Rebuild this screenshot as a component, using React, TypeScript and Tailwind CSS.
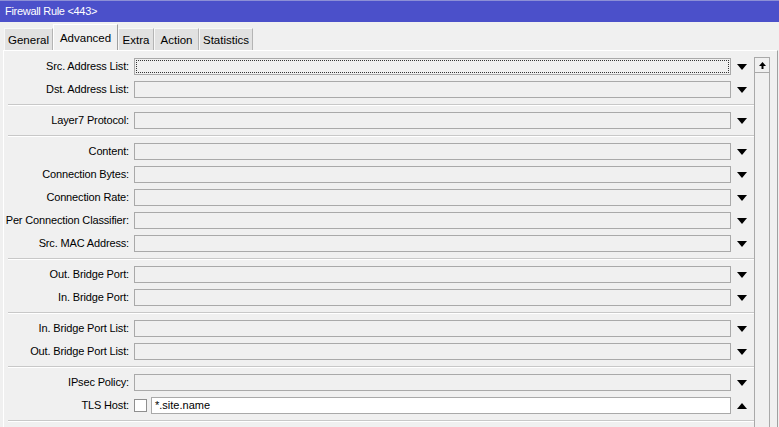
import React from 'react';

type Row = { label: string; kind?: 'tls'; focus?: boolean } | 'sep';

const rows: Row[] = [
  { label: 'Src. Address List:', focus: true },
  { label: 'Dst. Address List:' },
  'sep',
  { label: 'Layer7 Protocol:' },
  'sep',
  { label: 'Content:' },
  { label: 'Connection Bytes:' },
  { label: 'Connection Rate:' },
  { label: 'Per Connection Classifier:' },
  { label: 'Src. MAC Address:' },
  'sep',
  { label: 'Out. Bridge Port:' },
  { label: 'In. Bridge Port:' },
  'sep',
  { label: 'In. Bridge Port List:' },
  { label: 'Out. Bridge Port List:' },
  'sep',
  { label: 'IPsec Policy:' },
  { label: 'TLS Host:', kind: 'tls' },
  'sep',
];

const tabs = [
  { name: 'General', w: 'w-[49px]' },
  { name: 'Advanced', w: 'w-[65px]', active: true },
  { name: 'Extra', w: 'w-[36px]' },
  { name: 'Action', w: 'w-[45px]' },
  { name: 'Statistics', w: 'w-[54px]' },
];

const Arrow = ({ up }: { up?: boolean }) => (
  <svg width="10" height="6" viewBox="0 0 10 6">
    {up ? <polygon points="0,6 10,6 5,0" fill="#000" /> : <polygon points="0,0 10,0 5,6" fill="#000" />}
  </svg>
);

export default function App() {
  return (
    <div
      className="w-[779px] h-[427px] overflow-hidden bg-[#f0f0f0] flex flex-col text-[11px] text-black"
      style={{ fontFamily: '"Liberation Sans", Arial, sans-serif' }}
    >
      {/* title bar */}
      <div className="h-[22px] shrink-0 bg-[#4b50ca] border-t border-[#8c8fd6] flex items-center pl-[5px] text-white tracking-[-0.3px]">
        Firewall Rule &lt;443&gt;
      </div>

      {/* tabs */}
      <div className="h-[28px] shrink-0 flex items-end pl-[4px]">
        {tabs.map((t) =>
          t.active ? (
            <div
              key={t.name}
              className={`${t.w} h-[26px] bg-[#f0f0f0] border-t border-l border-white border-r border-r-[#a0a0a0] flex items-start justify-center pt-[5px] text-[11.5px]`}
            >
              {t.name}
            </div>
          ) : (
            <div
              key={t.name}
              className={`${t.w} h-[22px] bg-[#e1e1e1] border-t border-l border-[#f7f7f7] border-r border-r-[#b4b4b4] flex items-center justify-center text-[11.5px] pt-[2px]`}
            >
              {t.name}
            </div>
          )
        )}
      </div>

      {/* panel */}
      <div className="flex-1 ml-[3px] w-[775px] border-t border-l border-white border-r border-r-[#a0a0a0] flex">
        <div className="w-[750px] pt-[4px] flex flex-col">
          {rows.map((r, i) =>
            r === 'sep' ? (
              <div key={i} className="h-[8px] flex items-center pl-[4px]">
                <div className="w-full border-t border-[#c8c8c8] border-b border-b-white" />
              </div>
            ) : (
              <div key={i} className="h-[23px] flex items-center">
                <div className="w-[125px] text-right whitespace-nowrap tracking-[-0.15px]">{r.label}</div>
                {r.kind === 'tls' ? (
                  <>
                    <div className="ml-[5px] w-[13px] h-[13px] bg-white border border-[#8f8f8f]" />
                    <div className="ml-[4px] w-[580px] h-[17px] bg-white border border-[#a9a9a9] flex items-center pl-[3px]">
                      *.site.name
                    </div>
                  </>
                ) : (
                  <div className="ml-[5px] w-[597px] h-[17px] border border-[#a9a9a9] bg-[#f0f0f0] p-px">
                    {r.focus && <div className="w-full h-full border border-dotted border-[#333]" />}
                  </div>
                )}
                <div className="w-[22px] flex justify-center">
                  <Arrow up={r.kind === 'tls'} />
                </div>
              </div>
            )
          )}
        </div>

        {/* scrollbar */}
        <div className="mt-[6px] w-[16px] border-l border-r border-[#a9a9a9] flex flex-col">
          <div className="h-[16px] border-t border-b border-[#a9a9a9] flex items-center justify-center">
            <svg width="7" height="7" viewBox="0 0 7 7">
              <polygon points="0,4 7,4 3.5,0" fill="#000" />
              <rect x="2.5" y="4" width="2" height="3" fill="#000" />
            </svg>
          </div>
        </div>
      </div>
    </div>
  );
}
